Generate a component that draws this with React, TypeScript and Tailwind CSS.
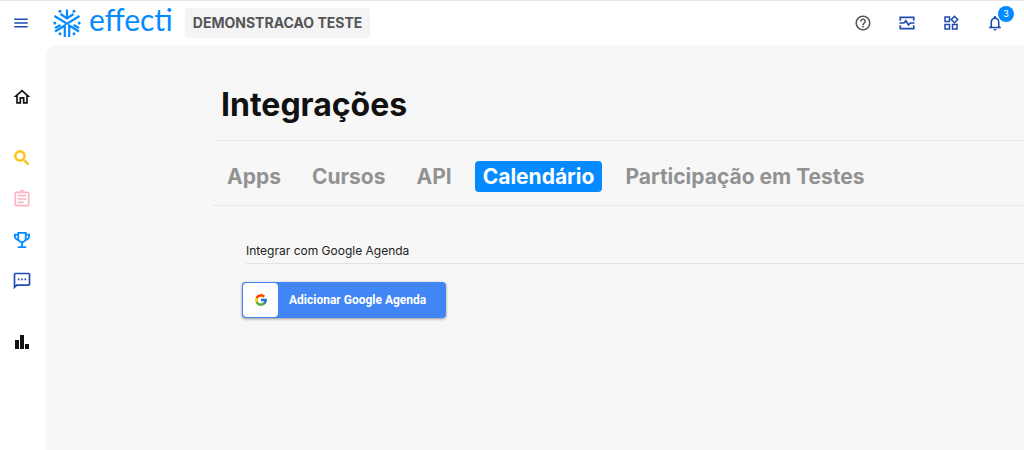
import {
  MdHelpOutline,
  MdMenu,
  MdNotificationsNone,
  MdOutlineAssignment,
  MdOutlineHome,
  MdOutlineSms,
  MdOutlineWidgets,
  MdSearch,
} from 'react-icons/md';
import { FcGoogle } from 'react-icons/fc';

const tabs = ['Apps', 'Cursos', 'API', 'Calendário', 'Participação em Testes'];

const LogoMark = () => (
  <svg viewBox="0 0 28 28" className="w-7 h-7 text-[#058bff]" fill="none" stroke="currentColor" strokeWidth="2.2" aria-hidden="true">
    <path d="M14 0.5V9.5M7.5 5L14 9.5L20.5 5" />
    <path d="M1.5 7L14 14.8L26.5 7" />
    <path d="M11.8 28V16.5L2 22.5M16.2 28V16.5L26 22.5M7.5 16L2 19M20.5 16L26 19" />
    <g fill="currentColor" stroke="none">
      <circle cx="7" cy="2.2" r="1.5" />
      <circle cx="21" cy="2.2" r="1.5" />
      <circle cx="1.8" cy="14" r="1.5" />
      <circle cx="26.2" cy="14" r="1.5" />
      <circle cx="7" cy="24.8" r="1.5" />
      <circle cx="21" cy="24.8" r="1.5" />
    </g>
  </svg>
);

const TrophyIcon = () => (
  <svg viewBox="0 0 24 24" className="w-5 h-5" fill="none" stroke="currentColor" strokeWidth="2.2" aria-hidden="true">
    <path d="M7.5 3.5h9v6.5a4.5 4.5 0 0 1-9 0z" />
    <path d="M7.5 5.5H3.5v2a4.5 4.5 0 0 0 4.5 4.5M16.5 5.5h4v2a4.5 4.5 0 0 1-4.5 4.5M12 14.5V20M7 20.5h10" />
  </svg>
);

const ActivityIcon = () => (
  <svg viewBox="0 0 24 24" className="w-[18px] h-[18px]" fill="none" stroke="currentColor" strokeWidth="2.2" aria-hidden="true">
    <path d="M3 9V4.5h18V9M3 15v4.5h18V15" />
    <path d="M2 12H8l2.5-3 3.5 5.5 2.5-2.5H22" />
  </svg>
);

const BarsIcon = () => (
  <svg viewBox="0 0 20 20" className="w-5 h-5" fill="currentColor" aria-hidden="true">
    <path d="M3 8h4v9H3zM8 3h4v14H8zM13 12h4v5h-4z" />
  </svg>
);

const Header = () => (
  <header className="flex items-center h-[45px] border-t border-[#e5e5e5] pl-3 pr-3">
    <button type="button" aria-label="Menu" className="text-[#1f4bb0]">
      <MdMenu className="w-[18px] h-[18px]" />
    </button>
    <a href="#" className="flex items-center gap-2 ml-[23px]">
      <LogoMark />
      <span className="pb-2 font-['Lato',sans-serif] text-[30px] leading-8 text-[#058bff]">effecti</span>
    </a>
    <span className="ml-3 rounded bg-[#f3f4f6] px-2 h-[30px] leading-[30px] text-sm font-bold text-[#555] whitespace-nowrap">
      DEMONSTRACAO TESTE
    </span>
    <div className="ml-auto flex items-center gap-[26px] text-[#1f4bb0]">
      <button type="button" aria-label="Ajuda" className="text-[#555]">
        <MdHelpOutline className="w-[18px] h-[18px]" />
      </button>
      <button type="button" aria-label="Atividade"><ActivityIcon /></button>
      <button type="button" aria-label="Aplicativos"><MdOutlineWidgets className="w-[18px] h-[18px]" /></button>
      <button type="button" aria-label="Notificações" className="relative mr-2">
        <MdNotificationsNone className="w-[18px] h-[18px]" />
        <span className="absolute -top-2 left-3 w-4 h-4 rounded-full bg-[#058bff] text-white text-[9px] leading-4 text-center">3</span>
      </button>
    </div>
  </header>
);

const Sidebar = () => (
  <nav className="w-[46px] shrink-0 flex flex-col items-center pt-[42px] pr-[2px] gap-[21px]">
    <a href="#" aria-label="Início" className="text-[#111] mb-5"><MdOutlineHome className="w-5 h-5" /></a>
    <a href="#" aria-label="Buscar" className="text-[#fbc412]">
      <MdSearch className="w-5 h-5 [&>path:last-child]:stroke-1" />
    </a>
    <a href="#" aria-label="Editais" className="text-[#ffb3c4]"><MdOutlineAssignment className="w-5 h-5" /></a>
    <a href="#" aria-label="Disputas" className="text-[#058bff]"><TrophyIcon /></a>
    <a href="#" aria-label="Mensagens" className="text-[#1f4bb0] mb-5"><MdOutlineSms className="w-5 h-5" /></a>
    <a href="#" aria-label="Relatórios" className="text-[#111]"><BarsIcon /></a>
  </nav>
);

export default function App() {
  return (
    <div className="min-h-screen flex flex-col bg-white font-['Inter',sans-serif] overflow-x-hidden">
      <Header />
      <div className="flex flex-1">
        <Sidebar />
        <main className="flex-1 min-w-0 rounded-tl-xl bg-[#f7f7f7] pl-[166px]">
          <h1 className="ml-[5px] pl-1 pt-10 pb-[15px] border-b border-[#e3e6ea] text-[32px] leading-10 font-bold text-[#111]">
            Integrações
          </h1>
          <div className="flex gap-[15px] pl-[7px] pt-5 pb-[13px] border-b border-[#e8e8e8] text-[21px] leading-[30px] font-bold whitespace-nowrap">
            {tabs.map((tab) => (
              <button
                key={tab}
                type="button"
                className={tab === 'Calendário'
                  ? 'h-[31px] px-2 rounded bg-[#058bff] text-white'
                  : 'h-[31px] px-2 rounded text-[#929292]'}
              >
                {tab}
              </button>
            ))}
          </div>
          <section className="pl-[30px] pt-[37px]">
            <h2 className="ml-1 pb-1 border-b border-[#e3e3e3] text-xs leading-4 text-[#222]">
              Integrar com Google Agenda
            </h2>
            <button
              type="button"
              className="mt-[18px] flex items-center h-9 rounded-sm bg-[#4285f4] p-px pr-5 text-white shadow-[0_1px_3px_rgba(0,0,0,0.4)]"
            >
              <span className="flex items-center justify-center w-[35px] h-[34px] rounded-sm bg-white">
                <FcGoogle className="w-[14px] h-[14px]" />
              </span>
              <span className="ml-[11px] font-['Roboto',sans-serif] text-xs font-bold whitespace-nowrap">Adicionar Google Agenda</span>
            </button>
          </section>
        </main>
      </div>
    </div>
  );
}
